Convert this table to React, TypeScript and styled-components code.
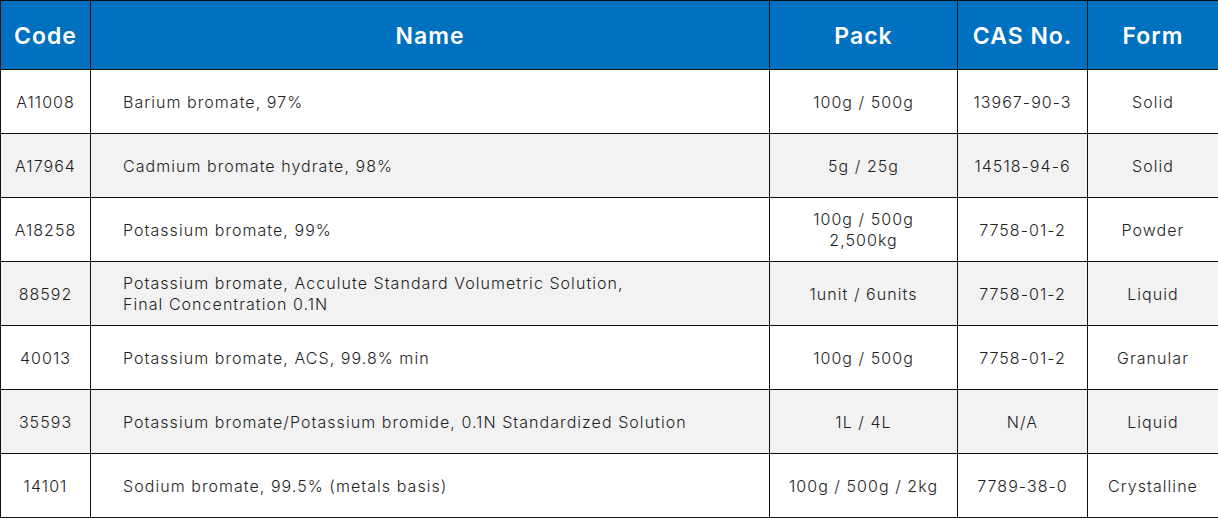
import React from 'react'
import styled, { createGlobalStyle } from 'styled-components'

const GlobalStyle = createGlobalStyle`
  html, body {
    margin: 0;
    padding: 0;
    background: #fff;
  }
  body {
    font-family: Inter, "Liberation Sans", sans-serif;
  }
`

const Table = styled.table`
  width: 1218px;
  border-collapse: collapse;
  table-layout: fixed;
  border: 1px solid #111;
`

const HeadCell = styled.th`
  height: 66px;
  padding: 2px 0 0;
  background: #0070c0;
  color: #fff;
  font-size: 23px;
  font-weight: 600;
  letter-spacing: 1px;
  text-align: center;
  border: 1px solid #111;
`

const Row = styled.tr<{ $shaded: boolean }>`
  background: ${(p) => (p.$shaded ? '#f2f2f2' : '#fff')};
`

const Cell = styled.td<{ $left?: boolean }>`
  height: 62px;
  padding: ${(p) => (p.$left ? '1px 0 0 32px' : '1px 2px 0')};
  border: 1px solid #111;
  color: #1e1e1e;
  font-size: 16px;
  font-weight: 300;
  letter-spacing: 1.05px;
  line-height: 21px;
  text-align: ${(p) => (p.$left ? 'left' : 'center')};
  vertical-align: middle;
`

interface Product {
  code: string
  name: string[]
  pack: string[]
  cas: string
  form: string
}

const products: Product[] = [
  { code: 'A11008', name: ['Barium bromate, 97%'], pack: ['100g / 500g'], cas: '13967-90-3', form: 'Solid' },
  { code: 'A17964', name: ['Cadmium bromate hydrate, 98%'], pack: ['5g / 25g'], cas: '14518-94-6', form: 'Solid' },
  { code: 'A18258', name: ['Potassium bromate, 99%'], pack: ['100g / 500g', '2,500kg'], cas: '7758-01-2', form: 'Powder' },
  {
    code: '88592',
    name: ['Potassium bromate, Acculute Standard Volumetric Solution,', 'Final Concentration 0.1N'],
    pack: ['1unit / 6units'],
    cas: '7758-01-2',
    form: 'Liquid',
  },
  { code: '40013', name: ['Potassium bromate, ACS, 99.8% min'], pack: ['100g / 500g'], cas: '7758-01-2', form: 'Granular' },
  {
    code: '35593',
    name: ['Potassium bromate/Potassium bromide, 0.1N Standardized Solution'],
    pack: ['1L / 4L'],
    cas: 'N/A',
    form: 'Liquid',
  },
  { code: '14101', name: ['Sodium bromate, 99.5% (metals basis)'], pack: ['100g / 500g / 2kg'], cas: '7789-38-0', form: 'Crystalline' },
]

const lines = (parts: string[]) =>
  parts.map((p, i) => (
    <React.Fragment key={i}>
      {i > 0 && <br />}
      {p}
    </React.Fragment>
  ))

export default function App() {
  return (
    <>
      <GlobalStyle />
      <Table>
        <colgroup>
          <col style={{ width: 90 }} />
          <col style={{ width: 679 }} />
          <col style={{ width: 188 }} />
          <col style={{ width: 130 }} />
          <col style={{ width: 131 }} />
        </colgroup>
        <thead>
          <tr>
            <HeadCell>Code</HeadCell>
            <HeadCell>Name</HeadCell>
            <HeadCell>Pack</HeadCell>
            <HeadCell>CAS No.</HeadCell>
            <HeadCell>Form</HeadCell>
          </tr>
        </thead>
        <tbody>
          {products.map((p, i) => (
            <Row key={p.code} $shaded={i % 2 === 1}>
              <Cell>{p.code}</Cell>
              <Cell $left>{lines(p.name)}</Cell>
              <Cell>{lines(p.pack)}</Cell>
              <Cell>{p.cas}</Cell>
              <Cell>{p.form}</Cell>
            </Row>
          ))}
        </tbody>
      </Table>
    </>
  )
}
